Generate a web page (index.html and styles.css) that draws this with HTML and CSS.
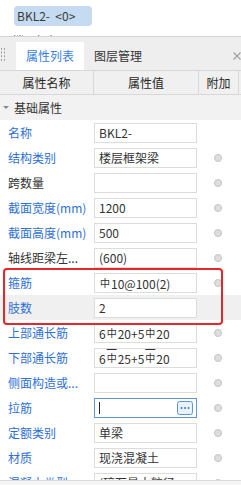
FILE: index.html
```html
<!DOCTYPE html>
<html lang="zh-CN">
<head>
  <meta charset="UTF-8" />
  <title>属性列表</title>
  <link rel="stylesheet" href="styles.css">
</head>
<body>
  <div class="canvas">
    <div class="badge">BKL2-&nbsp;&nbsp;&lt;0&gt;</div>
    <div class="ghost">楼层框架</div>
  </div>

  <div class="panel">
    <div class="tabs">
      <span class="grip"></span>
      <div class="tab active">属性列表</div>
      <div class="tab">图层管理</div>
      <svg class="close" width="8" height="8" viewBox="0 0 8 8">
        <path d="M0.5 0.5 L7.5 7.5 M7.5 0.5 L0.5 7.5" stroke="#a0a0a0" stroke-width="1.1" fill="none"/>
      </svg>
    </div>

    <div class="head">
      <div>属性名称</div>
      <div>属性值</div>
      <div>附加</div>
    </div>

    <div class="section"><span class="caret"></span>基础属性</div>

    <div class="list">
      <div class="row">
        <span class="label link">名称</span>
        <span class="val">BKL2-</span>
        <span></span>
      </div>
      <div class="row">
        <span class="label link">结构类别</span>
        <span class="val">楼层框架梁</span>
        <span class="dot"></span>
      </div>
      <div class="row">
        <span class="label">跨数量</span>
        <span class="val"></span>
        <span class="dot"></span>
      </div>
      <div class="row">
        <span class="label link">截面宽度(mm)</span>
        <span class="val">1200</span>
        <span class="dot"></span>
      </div>
      <div class="row">
        <span class="label link">截面高度(mm)</span>
        <span class="val">500</span>
        <span class="dot"></span>
      </div>
      <div class="row">
        <span class="label">轴线距梁左...</span>
        <span class="val">(600)</span>
        <span class="dot"></span>
      </div>
      <div class="row">
        <span class="label link">箍筋</span>
        <span class="val"><span class="bar">中</span>10@100(2)</span>
        <span class="dot"></span>
      </div>
      <div class="row selected">
        <span class="label link">肢数</span>
        <span class="val">2</span>
        <span></span>
      </div>
      <div class="row">
        <span class="label link">上部通长筋</span>
        <span class="val">6<span class="bar hrb">中</span>20+5<span class="bar hrb">中</span>20</span>
        <span class="dot"></span>
      </div>
      <div class="row">
        <span class="label link">下部通长筋</span>
        <span class="val">6<span class="bar hrb">中</span>25+5<span class="bar hrb">中</span>20</span>
        <span class="dot"></span>
      </div>
      <div class="row">
        <span class="label link">侧面构造或...</span>
        <span class="val"></span>
        <span class="dot"></span>
      </div>
      <div class="row">
        <span class="label link">拉筋</span>
        <span class="val editing">
          <span class="caret-line"></span>
          <svg class="more" width="16" height="14" viewBox="0 0 16 14">
            <rect x="0.5" y="0.5" width="15" height="13" rx="2" fill="#eaf2fd" stroke="#5b95e0"/>
            <circle cx="4.5" cy="7" r="1" fill="#3a7ad8"/>
            <circle cx="8" cy="7" r="1" fill="#3a7ad8"/>
            <circle cx="11.5" cy="7" r="1" fill="#3a7ad8"/>
          </svg>
        </span>
        <span class="dot"></span>
      </div>
      <div class="row">
        <span class="label link">定额类别</span>
        <span class="val">单梁</span>
        <span class="dot"></span>
      </div>
      <div class="row">
        <span class="label link">材质</span>
        <span class="val">现浇混凝土</span>
        <span class="dot"></span>
      </div>
      <div class="row">
        <span class="label link">混凝土类型</span>
        <span class="val">(碎石最大粒径</span>
        <span class="dot"></span>
      </div>

      <div class="mark"></div>
    </div>

    <div class="footer"></div>
  </div>
</body>
</html>
```

FILE: styles.css
```css
html, body {
  margin: 0;
  background: #fff;
}
body {
  width: 241px;
  height: 485px;
  overflow: hidden;
  font-family: "Noto Sans CJK SC", "Noto Sans", sans-serif;
  font-size: 12px;
  color: #333;
}

.canvas {
  height: 36px;
  overflow: hidden;
  padding-top: 6px;
  box-sizing: border-box;
}
.badge {
  margin-left: 14px;
  width: 78px;
  height: 20px;
  line-height: 20px;
  padding-left: 3px;
  box-sizing: border-box;
  background: #c5dbf2;
  border-radius: 4px;
  color: #3a3a3a;
}
.ghost {
  margin: 8px 0 0 12px;
  line-height: 14px;
  color: #555;
}

.panel {
  border-top: 1px solid #d4d4d4;
}
.tabs {
  height: 33px;
  background: #eeeeee;
  display: flex;
  align-items: flex-end;
  position: relative;
}
.grip {
  position: absolute;
  left: 0;
  top: 10px;
  width: 5px;
  height: 15px;
  background-image: radial-gradient(circle, #9a9a9a 0.8px, transparent 1px);
  background-size: 3px 3.7px;
}
.tab {
  height: 28px;
  line-height: 28px;
  padding: 0 10px;
  color: #333;
}
.tab.active {
  margin-left: 16px;
  background: #fff;
  color: #3a80df;
}
.close {
  position: absolute;
  right: 0;
  top: 15px;
}

.head {
  display: grid;
  grid-template-columns: 94px 105px 40px;
  height: 25px;
  background: #f0f0f0;
  border-top: 1px solid #d8d8d8;
  border-bottom: 1px solid #d8d8d8;
  box-sizing: border-box;
}
.head div {
  border-right: 1px solid #d8d8d8;
  text-align: center;
  line-height: 24px;
  color: #262626;
}

.section {
  height: 25px;
  line-height: 25px;
  background: #f2f2f2;
  padding-left: 14px;
  position: relative;
  color: #333;
}
.caret {
  position: absolute;
  left: 3px;
  top: 11px;
  border-left: 3px solid transparent;
  border-right: 3px solid transparent;
  border-top: 3px solid #8a8a8a;
}

.list {
  position: relative;
  height: 360px;
  overflow: hidden;
}
.row {
  display: grid;
  grid-template-columns: 94px 103px 1fr;
  height: 25px;
  align-items: center;
}
.row.selected {
  background: #f0f0f0;
}
.label {
  padding-left: 8px;
  white-space: nowrap;
  overflow: hidden;
}
.label.link {
  color: #2e6fd9;
}
.val {
  position: relative;
  height: 20px;
  line-height: 18px;
  box-sizing: border-box;
  border: 1px solid #dcdcdc;
  background: #fff;
  padding-left: 4px;
  white-space: nowrap;
  overflow: hidden;
  color: #333;
}
.bar {
  font-size: 10px;
  vertical-align: 2px;
  margin: 0 1px;
}
.bar.hrb {
  text-decoration: overline;
}
.val.editing {
  border-color: #5b95e0;
}
.caret-line {
  position: absolute;
  left: 4px;
  top: 3px;
  width: 1px;
  height: 12px;
  background: #222;
}
.more {
  position: absolute;
  right: 3px;
  top: 2px;
}
.dot {
  margin-left: 17px;
  width: 8px;
  height: 8px;
  box-sizing: border-box;
  border-radius: 50%;
  background: #dedede;
  border: 1px solid #c4c4c4;
}

.mark {
  position: absolute;
  left: 3px;
  top: 148px;
  width: 220px;
  height: 57px;
  box-sizing: border-box;
  border: 2px solid #e5262b;
  border-radius: 4px;
}

.footer {
  height: 5px;
  border-top: 1px solid #dcdcdc;
  background: #f5f5f5;
}
```
